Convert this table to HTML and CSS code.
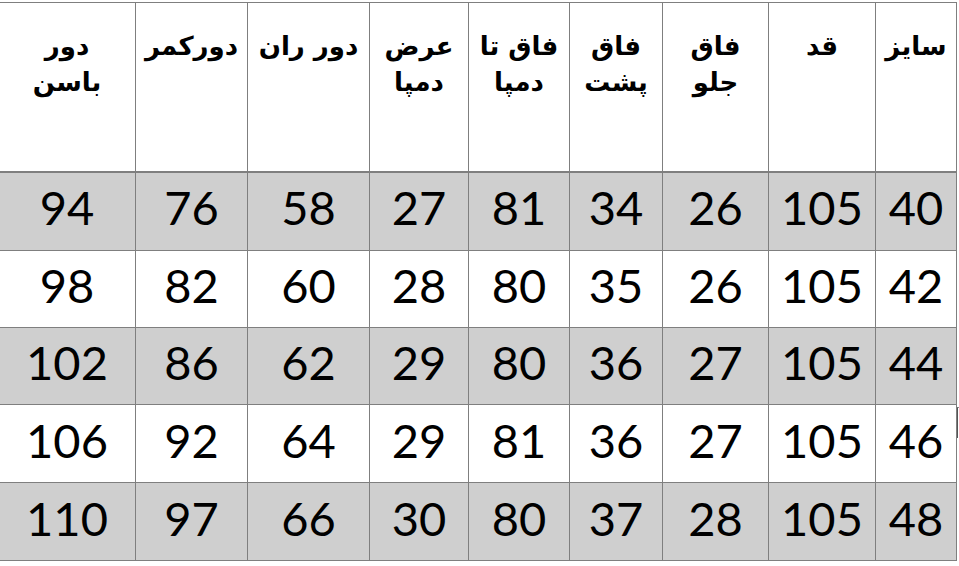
FILE: index.html
```html
<!DOCTYPE html>
<html lang="fa" dir="rtl">
<head>
<meta charset="utf-8">
<title>جدول سایز</title>
<link rel="stylesheet" href="styles.css">
</head>
<body>
<div class="sheet">
<table class="size-table">
  <colgroup>
    <col class="c-size">
    <col class="c-qad">
    <col class="c-jelo">
    <col class="c-posht">
    <col class="c-damp">
    <col class="c-arz">
    <col class="c-ran">
    <col class="c-kamar">
    <col class="c-basan">
  </colgroup>
  <thead>
    <tr class="head">
      <th>سایز</th>
      <th>قد</th>
      <th>فاق<br>جلو</th>
      <th>فاق<br>پشت</th>
      <th>فاق تا<br>دمپا</th>
      <th>عرض<br>دمپا</th>
      <th>دور ران</th>
      <th>دورکمر</th>
      <th>دور<br>باسن</th>
    </tr>
  </thead>
  <tbody>
    <tr class="row shade r1"><td>40</td><td>105</td><td>26</td><td>34</td><td>81</td><td>27</td><td>58</td><td>76</td><td>94</td></tr>
    <tr class="row r2"><td>42</td><td>105</td><td>26</td><td>35</td><td>80</td><td>28</td><td>60</td><td>82</td><td>98</td></tr>
    <tr class="row shade r3"><td>44</td><td>105</td><td>27</td><td>36</td><td>80</td><td>29</td><td>62</td><td>86</td><td>102</td></tr>
    <tr class="row r4"><td>46</td><td>105</td><td>27</td><td>36</td><td>81</td><td>29</td><td>64</td><td>92</td><td>106</td></tr>
    <tr class="row shade r5"><td>48</td><td>105</td><td>28</td><td>37</td><td>80</td><td>30</td><td>66</td><td>97</td><td>110</td></tr>
  </tbody>
</table>
<span class="edge-mark"></span>
</div>
</body>
</html>
```
FILE: styles.css
```css
html, body {
  margin: 0;
  padding: 0;
  background: #ffffff;
}
body {
  width: 959px;
  height: 566px;
  overflow: hidden;
}
.sheet {
  position: relative;
  padding-top: 2px;
  width: 959px;
}
.size-table {
  direction: rtl;
  border-collapse: collapse;
  table-layout: fixed;
  width: 958px;
  margin-right: 2px;
  margin-left: -1px;
  border: 1px solid #7f7f7f;
  color: #000;
}
.c-size { width: 81px; }
.c-qad { width: 107px; }
.c-jelo { width: 106px; }
.c-posht { width: 93px; }
.c-damp { width: 101px; }
.c-arz { width: 99px; }
.c-ran { width: 122px; }
.c-kamar { width: 112px; }
.c-basan { width: 137px; }

.size-table th,
.size-table td {
  border: 1px solid #7f7f7f;
  padding: 0;
  text-align: center;
}
.head th {
  height: 169px;
  vertical-align: top;
  font-family: "DejaVu Sans", sans-serif;
  font-weight: bold;
  font-size: 26px;
  line-height: 36px;
  padding-top: 25px;
  box-sizing: border-box;
  border-bottom: 2px solid #7f7f7f;
}
.row td {
  font-family: Lato, "Open Sans", sans-serif;
  font-size: 47px;
  line-height: 56px;
  vertical-align: middle;
  padding-bottom: 8px;
  box-sizing: border-box;
}
.r1 td { height: 79px; }
.r2 td { height: 77px; }
.r3 td { height: 77px; }
.r4 td { height: 78px; }
.r5 td { height: 78px; }
.shade td { background: #cfcfcf; }

.edge-mark {
  position: absolute;
  left: 957px;
  top: 407px;
  width: 1px;
  height: 30px;
  border-left: 1px solid #555;
  border-top: 1px solid #888;
}
```
